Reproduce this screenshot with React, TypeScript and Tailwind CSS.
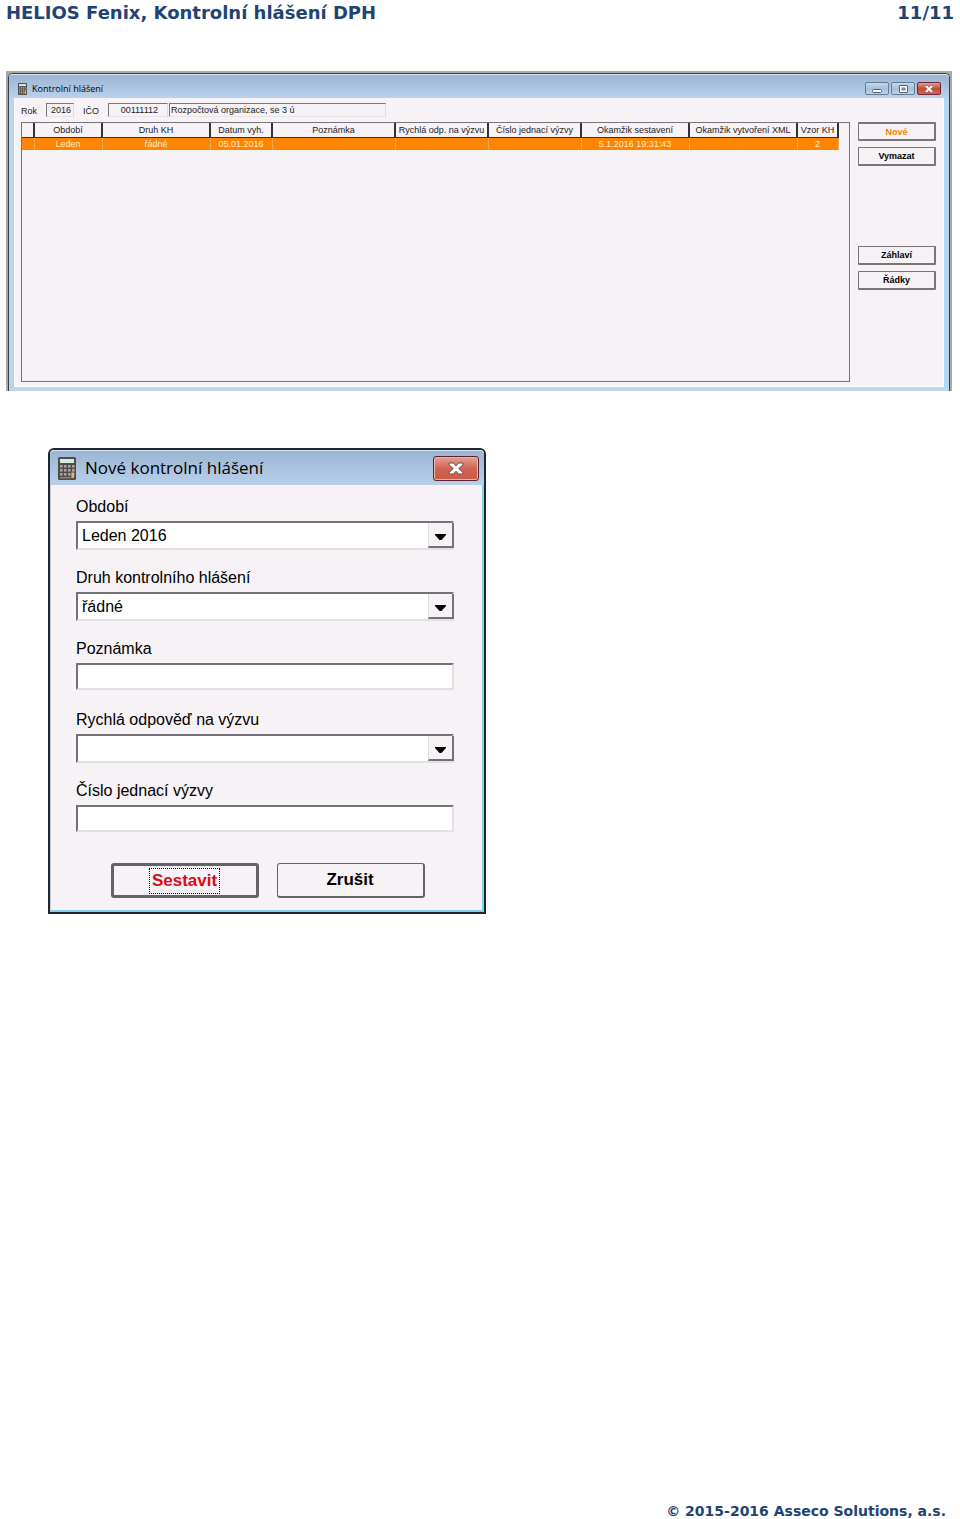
import { ReactNode, useState } from 'react';
import clsx from 'clsx';

interface Column {
  label: string;
  value: string;
  width: string;
}

const COLUMNS: Column[] = [
  { label: '', value: '', width: 'w-3' },
  { label: 'Období', value: 'Leden', width: 'w-[68px]' },
  { label: 'Druh KH', value: 'řádné', width: 'w-[108px]' },
  { label: 'Datum vyh.', value: '05.01.2016', width: 'w-[62px]' },
  { label: 'Poznámka', value: '', width: 'w-auto' },
  { label: 'Rychlá odp. na výzvu', value: '', width: 'w-[93px]' },
  { label: 'Číslo jednací výzvy', value: '', width: 'w-[93px]' },
  { label: 'Okamžik sestavení', value: '5.1.2016 19:31:43', width: 'w-[108px]' },
  { label: 'Okamžik vytvoření XML', value: '', width: 'w-[108px]' },
  { label: 'Vzor KH', value: '2', width: 'w-[41px]' },
];

function CalculatorIcon({ className }: { className: string }) {
  return (
    <svg viewBox="0 0 18 23" preserveAspectRatio="none" className={className} aria-hidden="true">
      <rect width="18" height="23" rx="1.5" fill="#504b48" />
      <rect x="2" y="2" width="14" height="4" fill="#d5ebdf" />
      {[8, 12, 16].map((y) =>
        [2, 6, 10, 14].map((x) => (
          <rect key={`${x}-${y}`} x={x} y={y} width="2.6" height="2.6" fill="#aaa39b" />
        ))
      )}
      <rect x="2" y="20" width="10.6" height="1.4" fill="#8d8780" />
      <rect x="13.4" y="15.5" width="2.6" height="5.5" fill="#f3b82c" />
    </svg>
  );
}

function CloseGlyph({ className }: { className: string }) {
  return (
    <svg viewBox="0 0 16 13" className={className} aria-hidden="true">
      <path
        d="M1 1h4.5L8 3.8 10.5 1H15v1.5L10.8 6.5 15 10.5V12h-4.5L8 9.2 5.5 12H1v-1.5L5.2 6.5 1 2.5z"
        fill="#fff"
        stroke="#6b4850"
        strokeWidth="1"
        strokeLinejoin="round"
      />
    </svg>
  );
}

interface ReadonlyFieldProps {
  id: string;
  value: string;
  className: string;
  ariaLabel?: string;
}

function ReadonlyField({ id, value, className, ariaLabel }: ReadonlyFieldProps) {
  return (
    <input
      id={id}
      aria-label={ariaLabel}
      readOnly
      value={value}
      className={clsx(
        'h-[14px] border border-t-[#77757a] border-l-[#77757a] border-r-[#dddbe0] border-b-[#e6e4e9] bg-transparent outline-none',
        className
      )}
    />
  );
}

function SideButton({ children, active }: { children: ReactNode; active?: boolean }) {
  return (
    <button
      className={clsx(
        'h-[19px] w-full rounded-[1px] border border-[#77757a] border-r-2 border-b-2 font-bold leading-3',
        active ? 'border-t-2 text-[#f08200]' : 'text-black'
      )}
    >
      {children}
    </button>
  );
}

function ReportsWindow() {
  return (
    <section className="border-2 border-b-0 border-[#aaa8a8] bg-[#aaa8a8] font-['Liberation_Sans',Arial,sans-serif] text-[9px] text-[#222]">
      <div className="rounded-t-[5px] border border-b-0 border-[#353e49] bg-[#bdd2ee]">
        <header className="flex h-6 items-center rounded-t-[4px] border-t border-[#dce8f4] bg-linear-to-b from-[#9bb5d3] to-[#bbd1eb] pt-1 pl-[9px] pr-2">
          <CalculatorIcon className="h-3 w-[9px]" />
          <h2 className="ml-[5px] flex-1 font-['Open_Sans','Noto_Sans',sans-serif] text-[9px] text-black">
            Kontrolní hlášení
          </h2>
          <div className="flex gap-[2px]">
            <button
              aria-label="Minimalizovat"
              className="flex h-[13px] w-6 items-center justify-center rounded-[2px] border border-[#667b95] bg-linear-to-b from-[#c5d7ec] via-[#a9c0db] to-[#bed2e8]"
            >
              <svg viewBox="0 0 10 4" className="mt-1 h-1 w-[10px]" aria-hidden="true">
                <rect x="0.5" y="0.5" width="9" height="3" rx="1" fill="#fff" stroke="#55606d" />
              </svg>
            </button>
            <button
              aria-label="Maximalizovat"
              className="flex h-[13px] w-6 items-center justify-center rounded-[2px] border border-[#667b95] bg-linear-to-b from-[#c5d7ec] via-[#a9c0db] to-[#bed2e8]"
            >
              <svg viewBox="0 0 9 8" className="h-2 w-[9px]" aria-hidden="true">
                <rect x="0.5" y="0.5" width="8" height="7" rx="0.5" fill="#fff" stroke="#55606d" />
                <rect x="3" y="3" width="3" height="2" fill="#a9c0db" stroke="#55606d" strokeWidth="0.8" />
              </svg>
            </button>
            <button
              aria-label="Zavřít"
              className="flex h-[13px] w-6 items-center justify-center rounded-[2px] border border-[#6b2a33] bg-linear-to-b from-[#e0a093] via-[#c44a35] to-[#d0634c]"
            >
              <CloseGlyph className="h-2 w-[10px]" />
            </button>
          </div>
        </header>

        <div className="border-l-[5px] border-r-[5px] border-b-4 border-l-[#bdd2ee] border-r-[#b0d8f4] border-b-[#c2d5ef]">
          <div className="border border-t-0 border-[#fbfafd] bg-[#f6f2f6] pt-[5px] pr-[7px] pb-1 pl-[6px]">
            <div className="flex h-[19px] items-start leading-[14px]">
              <label htmlFor="rok" className="w-[25px] pt-px">Rok</label>
              <ReadonlyField id="rok" value="2016" className="w-7 pl-1" />
              <label htmlFor="ico" className="ml-[9px] w-[25px] pt-px">IČO</label>
              <ReadonlyField id="ico" value="00111112" className="w-[60px] pr-[9px] text-right" />
              <ReadonlyField
                id="organizace"
                ariaLabel="Organizace"
                value="Rozpočtová organizace, se 3 ú"
                className="ml-px w-[217px] px-px"
              />
            </div>

            <div className="flex gap-2">
              <div className="h-[260px] min-w-0 flex-1 border border-[#77757a] pr-[10px]">
                <table className="w-full table-fixed border-collapse whitespace-nowrap">
                  <colgroup>
                    {COLUMNS.map((column) => (
                      <col key={column.label} className={column.width} />
                    ))}
                  </colgroup>
                  <thead>
                    <tr className="h-[14px]">
                      {COLUMNS.map((column) => (
                        <th
                          key={column.label}
                          className="border-r-2 border-b border-[#333] p-0 text-center font-normal leading-3"
                        >
                          {column.label}
                        </th>
                      ))}
                    </tr>
                  </thead>
                  <tbody>
                    <tr className="h-[13px] bg-[#ff8500] text-[#ffedc9]">
                      {COLUMNS.map((column) => (
                        <td key={column.label} className="border-r border-[#e3a666] p-0 text-center leading-3">
                          {column.value}
                        </td>
                      ))}
                    </tr>
                  </tbody>
                </table>
              </div>

              <div className="flex w-[78px] flex-col gap-[6px]">
                <SideButton active>Nové</SideButton>
                <SideButton>Vymazat</SideButton>
                <div className="mt-[74px] flex flex-col gap-[6px]">
                  <SideButton>Záhlaví</SideButton>
                  <SideButton>Řádky</SideButton>
                </div>
              </div>
            </div>
          </div>
        </div>
      </div>
    </section>
  );
}

const SUNKEN =
  'w-full rounded-none border-2 border-t-[#747276] border-l-[#747276] border-r-[#e2e0e4] border-b-[#e2e0e4] bg-white px-1 outline-none';

function TextField({ id, label }: { id: string; label: string }) {
  return (
    <div>
      <label htmlFor={id} className="mb-1 block leading-5">{label}</label>
      <input id={id} type="text" className={clsx(SUNKEN, 'block h-[27px]')} />
    </div>
  );
}

function SelectField({ id, label, options }: { id: string; label: string; options: string[] }) {
  const [value, setValue] = useState(options[0]);

  return (
    <div>
      <label htmlFor={id} className="mb-1 block leading-5">{label}</label>
      <div className="relative">
        <select
          id={id}
          value={value}
          onChange={(e) => setValue(e.target.value)}
          className={clsx(SUNKEN, 'block h-[29px] appearance-none')}
        >
          {options.map((option) => (
            <option key={option}>{option}</option>
          ))}
        </select>
        <span className="pointer-events-none absolute inset-y-[2px] right-0 flex w-[26px] items-center justify-center border-r-2 border-b-2 border-l border-[#747276] border-l-[#dddbe0] bg-[#f6f2f6]">
          <svg viewBox="0 0 11 6" className="mt-1 h-[6px] w-[11px]" aria-hidden="true">
            <path d="M0 0h11v1L6.500 6h-2L0 1z" fill="#000" />
          </svg>
        </span>
      </div>
    </div>
  );
}

function NewReportDialog() {
  return (
    <section
      role="dialog"
      aria-labelledby="dialog-title"
      className="w-full max-w-[438px] rounded-t-[6px] border-2 border-[#1c2731] bg-[#f6f2f6] font-['Liberation_Sans',Arial,sans-serif] text-base text-black"
    >
      <header className="flex h-[35px] items-center rounded-t-[4px] border-t border-[#d5e4f2] bg-linear-to-b from-[#9bb5d3] to-[#b9d0ea] pl-2 pr-[5px]">
        <CalculatorIcon className="h-[23px] w-[18px]" />
        <h2 id="dialog-title" className="ml-[9px] flex-1 font-['Open_Sans','Noto_Sans',sans-serif] text-[17px]">
          Nové kontrolní hlášení
        </h2>
        <button
          aria-label="Zavřít"
          className="flex h-[25px] w-[46px] items-center justify-center rounded-[3px] border border-[#5c2230] bg-linear-to-b from-[#e2a195] from-0% via-[#cf6552] via-50% to-[#cc5a44] to-100% shadow-[inset_0_0_0_1px_#e9b5aa]"
        >
          <CloseGlyph className="h-[13px] w-4" />
        </button>
      </header>

      <form
        className="border-r-2 border-b-2 border-l border-[#7fd0f2] border-l-[#c9ccd6] py-3 pr-7 pl-[25px]"
        onSubmit={(e) => e.preventDefault()}
      >
        <div className="grid auto-rows-[71px]">
          <SelectField id="obdobi" label="Období" options={['Leden 2016']} />
          <SelectField id="druh" label="Druh kontrolního hlášení" options={['řádné']} />
          <TextField id="poznamka" label="Poznámka" />
          <SelectField id="rychla-odpoved" label="Rychlá odpověď na výzvu" options={['']} />
          <TextField id="cislo-jednaci" label="Číslo jednací výzvy" />
        </div>
        <div className="mt-[11px] flex justify-center gap-[18px] pl-[5px] text-[17px] font-bold">
          <button
            type="submit"
            className="flex h-[35px] w-[148px] items-center justify-center rounded-[3px] border-3 border-[#656367] text-[#dc0a14]"
          >
            <span className="border border-dotted border-black px-[2px] leading-6">Sestavit</span>
          </button>
          <button
            type="button"
            className="h-[35px] w-[148px] rounded-[3px] border border-[#656367] border-r-2 border-b-2"
          >
            Zrušit
          </button>
        </div>
      </form>
    </section>
  );
}

export default function App() {
  return (
    <div className="flex min-h-screen flex-col bg-white font-['DejaVu_Sans',Verdana,sans-serif]">
      <header className="flex justify-between px-[6px] pt-px text-lg font-bold leading-6 text-[#1f4474]">
        <h1>HELIOS Fenix, Kontrolní hlášení DPH</h1>
        <span>11/11</span>
      </header>

      <main className="pt-[46px] pr-2 pl-[6px]">
        <ReportsWindow />
        <div className="mt-[57px] pl-[42px]">
          <NewReportDialog />
        </div>
      </main>

      <footer className="mt-auto pr-[14px] text-right text-sm font-bold leading-4 text-[#1f4474]">
        © 2015-2016 Asseco Solutions, a.s.
      </footer>
    </div>
  );
}
